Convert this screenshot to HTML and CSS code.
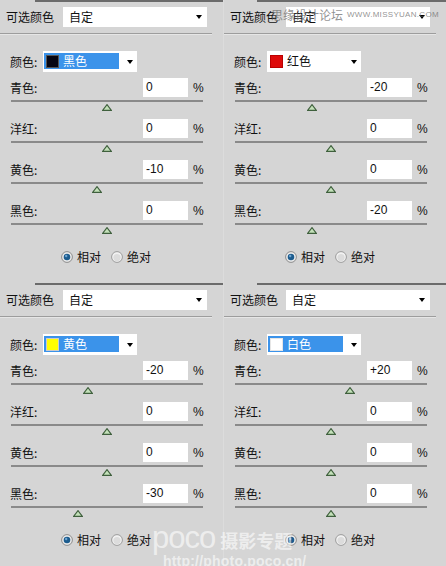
FILE: index.html
```html
<!DOCTYPE html>
<html lang="zh-CN">
<head>
    <meta charset="UTF-8">
    <title>可选颜色</title>
    <link rel="stylesheet" href="styles.css">
</head>
<body>
    <svg class="defs" width="0" height="0">
        <symbol id="thumb" viewBox="0 0 10 7">
            <polygon points="5,0.6 9.4,6.4 0.6,6.4" fill="#c3e0b9" stroke="#3f603d" stroke-width="1.1"/>
        </symbol>
        <symbol id="radio-on" viewBox="0 0 12 12">
            <circle cx="6" cy="6" r="5.4" fill="#e9e9e9" stroke="#8d8d8d" stroke-width="1"/>
            <circle cx="6" cy="6" r="3.3" fill="#1c5c8e"/>
            <circle cx="5.2" cy="5" r="1.2" fill="#6fa6d2"/>
        </symbol>
        <symbol id="radio-off" viewBox="0 0 12 12">
            <circle cx="6" cy="6" r="5.4" fill="#f1f1f1" stroke="#9b9b9b" stroke-width="1"/>
            <circle cx="6" cy="6.6" r="3.6" fill="#dcdcdc"/>
        </symbol>
    </svg>

    <div class="board">
        <!-- 黑色 -->
        <section class="panel">
            <div class="top-rule"></div>
            <div class="head">
                <span class="head-label">可选颜色</span>
                <div class="select wide"><span>自定</span><i class="caret"></i></div>
            </div>
            <div class="sep"></div>
            <div class="color-row">
                <span class="label">颜色:</span>
                <div class="select color-select">
                    <span class="pick focused"><b class="swatch black"></b>黑色</span>
                    <i class="caret"></i>
                </div>
            </div>
            <div class="slider-row first">
                <div class="slider-head"><span class="label">青色:</span><span class="num">0</span><span class="pct">%</span></div>
                <div class="track"><svg class="thumb" style="--v:0"><use href="#thumb"/></svg></div>
            </div>
            <div class="slider-row">
                <div class="slider-head"><span class="label">洋红:</span><span class="num">0</span><span class="pct">%</span></div>
                <div class="track"><svg class="thumb" style="--v:0"><use href="#thumb"/></svg></div>
            </div>
            <div class="slider-row">
                <div class="slider-head"><span class="label">黄色:</span><span class="num">-10</span><span class="pct">%</span></div>
                <div class="track"><svg class="thumb" style="--v:-10"><use href="#thumb"/></svg></div>
            </div>
            <div class="slider-row">
                <div class="slider-head"><span class="label">黑色:</span><span class="num">0</span><span class="pct">%</span></div>
                <div class="track"><svg class="thumb" style="--v:0"><use href="#thumb"/></svg></div>
            </div>
            <div class="mode">
                <svg class="radio"><use href="#radio-on"/></svg><span class="opt">相对</span>
                <svg class="radio second"><use href="#radio-off"/></svg><span class="opt">绝对</span>
            </div>
        </section>

        <!-- 红色 -->
        <section class="panel right">
            <div class="top-rule"></div>
            <div class="head">
                <span class="head-label">可选颜色</span>
                <div class="select wide"><span>自定</span><i class="caret"></i></div>
            </div>
            <div class="sep"></div>
            <div class="color-row">
                <span class="label">颜色:</span>
                <div class="select color-select">
                    <span class="pick"><b class="swatch red"></b>红色</span>
                    <i class="caret"></i>
                </div>
            </div>
            <div class="slider-row first">
                <div class="slider-head"><span class="label">青色:</span><span class="num">-20</span><span class="pct">%</span></div>
                <div class="track"><svg class="thumb" style="--v:-20"><use href="#thumb"/></svg></div>
            </div>
            <div class="slider-row">
                <div class="slider-head"><span class="label">洋红:</span><span class="num">0</span><span class="pct">%</span></div>
                <div class="track"><svg class="thumb" style="--v:0"><use href="#thumb"/></svg></div>
            </div>
            <div class="slider-row">
                <div class="slider-head"><span class="label">黄色:</span><span class="num">0</span><span class="pct">%</span></div>
                <div class="track"><svg class="thumb" style="--v:0"><use href="#thumb"/></svg></div>
            </div>
            <div class="slider-row">
                <div class="slider-head"><span class="label">黑色:</span><span class="num">-20</span><span class="pct">%</span></div>
                <div class="track"><svg class="thumb" style="--v:-20"><use href="#thumb"/></svg></div>
            </div>
            <div class="mode">
                <svg class="radio"><use href="#radio-on"/></svg><span class="opt">相对</span>
                <svg class="radio second"><use href="#radio-off"/></svg><span class="opt">绝对</span>
            </div>
        </section>

        <!-- 黄色 -->
        <section class="panel">
            <div class="top-rule"></div>
            <div class="head">
                <span class="head-label">可选颜色</span>
                <div class="select wide"><span>自定</span><i class="caret"></i></div>
            </div>
            <div class="sep"></div>
            <div class="color-row">
                <span class="label">颜色:</span>
                <div class="select color-select">
                    <span class="pick focused"><b class="swatch yellow"></b>黄色</span>
                    <i class="caret"></i>
                </div>
            </div>
            <div class="slider-row first">
                <div class="slider-head"><span class="label">青色:</span><span class="num">-20</span><span class="pct">%</span></div>
                <div class="track"><svg class="thumb" style="--v:-20"><use href="#thumb"/></svg></div>
            </div>
            <div class="slider-row">
                <div class="slider-head"><span class="label">洋红:</span><span class="num">0</span><span class="pct">%</span></div>
                <div class="track"><svg class="thumb" style="--v:0"><use href="#thumb"/></svg></div>
            </div>
            <div class="slider-row">
                <div class="slider-head"><span class="label">黄色:</span><span class="num">0</span><span class="pct">%</span></div>
                <div class="track"><svg class="thumb" style="--v:0"><use href="#thumb"/></svg></div>
            </div>
            <div class="slider-row">
                <div class="slider-head"><span class="label">黑色:</span><span class="num">-30</span><span class="pct">%</span></div>
                <div class="track"><svg class="thumb" style="--v:-30"><use href="#thumb"/></svg></div>
            </div>
            <div class="mode">
                <svg class="radio"><use href="#radio-on"/></svg><span class="opt">相对</span>
                <svg class="radio second"><use href="#radio-off"/></svg><span class="opt">绝对</span>
            </div>
        </section>

        <!-- 白色 -->
        <section class="panel right">
            <div class="top-rule"></div>
            <div class="head">
                <span class="head-label">可选颜色</span>
                <div class="select wide"><span>自定</span><i class="caret"></i></div>
            </div>
            <div class="sep"></div>
            <div class="color-row">
                <span class="label">颜色:</span>
                <div class="select color-select">
                    <span class="pick focused"><b class="swatch white"></b>白色</span>
                    <i class="caret"></i>
                </div>
            </div>
            <div class="slider-row first">
                <div class="slider-head"><span class="label">青色:</span><span class="num">+20</span><span class="pct">%</span></div>
                <div class="track"><svg class="thumb" style="--v:20"><use href="#thumb"/></svg></div>
            </div>
            <div class="slider-row">
                <div class="slider-head"><span class="label">洋红:</span><span class="num">0</span><span class="pct">%</span></div>
                <div class="track"><svg class="thumb" style="--v:0"><use href="#thumb"/></svg></div>
            </div>
            <div class="slider-row">
                <div class="slider-head"><span class="label">黄色:</span><span class="num">0</span><span class="pct">%</span></div>
                <div class="track"><svg class="thumb" style="--v:0"><use href="#thumb"/></svg></div>
            </div>
            <div class="slider-row">
                <div class="slider-head"><span class="label">黑色:</span><span class="num">0</span><span class="pct">%</span></div>
                <div class="track"><svg class="thumb" style="--v:0"><use href="#thumb"/></svg></div>
            </div>
            <div class="mode">
                <svg class="radio"><use href="#radio-on"/></svg><span class="opt">相对</span>
                <svg class="radio second"><use href="#radio-off"/></svg><span class="opt">绝对</span>
            </div>
        </section>

        <!-- site stamps -->
        <div class="stamp-top">
            <span class="stamp-cn">思缘设计论坛</span>
            <span class="stamp-url">WWW.MISSYUAN.COM</span>
        </div>
        <div class="stamp-bottom">
            <div class="stamp-brand"><span class="poco">poco</span><span class="topic">摄影专题</span></div>
            <div class="stamp-link">http://photo.poco.cn/</div>
        </div>
    </div>
</body>
</html>
```

FILE: styles.css
```css
* {
    margin: 0;
    padding: 0;
    box-sizing: border-box;
}

body {
    background: #d5d5d5;
    font-family: "Noto Sans CJK SC", sans-serif;
    font-size: 12px;
    line-height: 16px;
    color: #111;
}

.defs {
    position: absolute;
}

.board {
    position: relative;
    display: grid;
    grid-template-columns: 223px 223px;
    grid-template-rows: 283px 283px;
    width: 446px;
    height: 566px;
    overflow: hidden;
}

.panel {
    height: 283px;
}

.panel.right {
    border-left: 1px solid #dcdcdc;
}

.top-rule {
    height: 2px;
    margin-left: 35px;
    background: #6b6b6b;
}

.panel.right .top-rule {
    margin-left: 33px;
}

/* header: 可选颜色 + preset */
.head {
    display: flex;
    align-items: center;
    height: 20px;
    margin-top: 5px;
}

.head-label {
    width: 63px;
    padding-left: 6px;
}

.panel.right .head-label {
    width: 62px;
}

.select {
    display: flex;
    align-items: center;
    background: #fff;
}

.select.wide {
    width: 144px;
    height: 20px;
    padding-left: 6px;
}

.caret {
    width: 0;
    height: 0;
    margin-left: auto;
    margin-right: 5px;
    border-left: 3.5px solid transparent;
    border-right: 3.5px solid transparent;
    border-top: 4px solid #000;
}

.sep {
    width: 212px;
    height: 1px;
    margin-top: 6px;
    background: #9d9d9d;
    box-shadow: 0 1px 0 #e6e6e6;
}

/* 颜色 dropdown */
.color-row {
    display: flex;
    align-items: center;
    height: 21px;
    margin-top: 17px;
}

.color-row .label {
    width: 43px;
    padding-left: 10px;
}

.color-select {
    width: 94px;
    height: 21px;
}

.color-select .caret {
    margin-right: 4px;
}

.pick {
    display: flex;
    align-items: center;
    width: 75px;
    height: 16px;
    margin-left: 1px;
    margin-top: -1px;
}

.pick.focused {
    background: #3b93ea;
    color: #fff;
}

.swatch {
    width: 13px;
    height: 13px;
    margin: 0 4px 0 2px;
    border: 1px solid #555;
}

.swatch.black { background: #060612; }
.swatch.red { background: #de0a0a; border-color: #b00; }
.swatch.yellow { background: #ffff00; border-color: #ccc; }
.swatch.white { background: #fff; border-color: #e6e6e6; }

/* slider rows */
.slider-row {
    height: 41px;
}

.slider-row.first {
    margin-top: 6px;
}

.slider-head {
    display: flex;
    align-items: center;
    height: 19px;
}

.slider-head .label {
    width: 143px;
    padding-left: 10px;
}

.num {
    width: 45px;
    height: 19px;
    padding-left: 3px;
    background: #fff;
    font-family: "Liberation Sans", sans-serif;
    font-size: 12px;
    line-height: 19px;
}

.pct {
    margin-left: 5px;
    font-family: "Liberation Sans", sans-serif;
    font-size: 12px;
}

.track {
    position: relative;
    width: 192px;
    height: 2px;
    margin: 3px 0 0 11px;
    background: #8a8a8a;
}

.thumb {
    position: absolute;
    top: 4px;
    left: calc(91px + var(--v) * 0.96px);
    width: 10px;
    height: 7px;
}

/* 相对 / 绝对 */
.mode {
    display: flex;
    align-items: center;
    height: 14px;
    margin-top: 8px;
    padding-left: 61px;
}

.radio {
    width: 12px;
    height: 12px;
}

.radio.second {
    margin-left: 10px;
}

.opt {
    margin-left: 4px;
}

/* site stamps over the panels */
.stamp-top {
    position: absolute;
    top: 7px;
    left: 271px;
    display: flex;
    align-items: center;
    color: rgba(110, 110, 110, 0.75);
}

.stamp-cn {
    font-size: 12px;
}

.stamp-url {
    margin-left: 4px;
    font-family: "Liberation Sans", sans-serif;
    font-size: 8px;
    letter-spacing: 0.3px;
}

.stamp-bottom {
    position: absolute;
    top: 523px;
    left: 152px;
    color: rgba(255, 255, 255, 0.6);
}

.stamp-brand {
    display: flex;
    align-items: baseline;
}

.poco {
    font-family: "Liberation Sans", sans-serif;
    font-size: 31px;
    line-height: 30px;
    letter-spacing: -1px;
}

.topic {
    margin-left: 5px;
    font-size: 18px;
    font-weight: 700;
}

.stamp-link {
    margin: 1px 0 0 11px;
    font-family: "Liberation Sans", sans-serif;
    font-size: 14px;
    font-weight: 700;
    line-height: 14px;
    letter-spacing: 0.2px;
}
```
